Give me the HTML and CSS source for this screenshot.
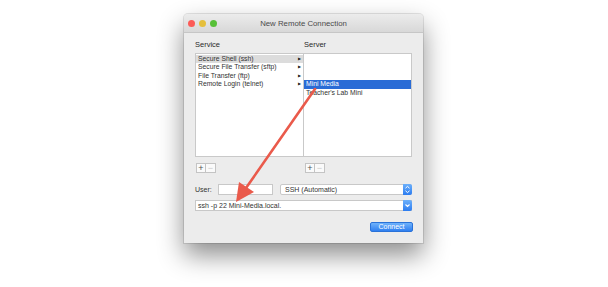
FILE: index.html
```html
<!DOCTYPE html>
<html lang="en">
<head>
    <meta charset="UTF-8">
    <title>New Remote Connection</title>
    <link rel="stylesheet" href="styles.css">
</head>
<body>
    <div class="window">
        <div class="titlebar">
            <div class="lights">
                <span class="light red"></span>
                <span class="light yellow"></span>
                <span class="light green"></span>
            </div>
            <div class="title">New Remote Connection</div>
        </div>
        <div class="content">
            <div class="columns">
                <div class="column">
                    <div class="label">Service</div>
                    <div class="list service-list">
                        <div class="row selected-gray">Secure Shell (ssh)<span class="tri">&#9654;</span></div>
                        <div class="row">Secure File Transfer (sftp)<span class="tri">&#9654;</span></div>
                        <div class="row">File Transfer (ftp)<span class="tri">&#9654;</span></div>
                        <div class="row">Remote Login (telnet)<span class="tri">&#9654;</span></div>
                    </div>
                    <div class="plusminus">
                        <span class="pm">+</span><span class="pm off">&minus;</span>
                    </div>
                </div>
                <div class="column">
                    <div class="label">Server</div>
                    <div class="list server-list">
                        <div class="row"></div>
                        <div class="row"></div>
                        <div class="row"></div>
                        <div class="row selected-blue">Mini Media</div>
                        <div class="row">Teacher's Lab Mini</div>
                    </div>
                    <div class="plusminus">
                        <span class="pm">+</span><span class="pm off">&minus;</span>
                    </div>
                </div>
            </div>

            <div class="user-row">
                <span class="user-label">User:</span>
                <span class="field user-field"></span>
                <span class="field popup">SSH (Automatic)
                    <span class="blue-btn">
                        <svg width="9" height="11" viewBox="0 0 9 11"><path d="M2.5 4.2 L4.5 2.4 L6.5 4.2 M2.5 6.8 L4.5 8.6 L6.5 6.8" fill="none" stroke="#fff" stroke-width="1"/></svg>
                    </span>
                </span>
            </div>

            <div class="field command">ssh -p 22 Mini-Media.local.
                <span class="blue-btn">
                    <svg width="9" height="11" viewBox="0 0 9 11"><path d="M2.5 4.5 L4.5 6.5 L6.5 4.5" fill="none" stroke="#fff" stroke-width="1.1"/></svg>
                </span>
            </div>

            <div class="actions">
                <span class="connect">Connect</span>
            </div>
        </div>
    </div>

    <svg class="arrow" width="608" height="287" viewBox="0 0 608 287">
        <line x1="315" y1="89" x2="246" y2="188" stroke="#ea5a4b" stroke-width="2.6" stroke-linecap="round"/>
        <polygon points="236,202 239,182 254,192" fill="#ea5a4b"/>
    </svg>
</body>
</html>
```

FILE: styles.css
```css
body {
    margin: 0;
    padding: 0;
    background: #fff;
    font-family: "Liberation Sans", Arial, sans-serif;
    color: #222;
    width: 608px;
    height: 287px;
    overflow: hidden;
    position: relative;
}
.window {
    margin: 14px 0 0 184px;
    width: 239px;
    height: 229px;
    background: #ececec;
    border-radius: 4px 4px 0 0;
    box-shadow: 0 12px 26px rgba(0, 0, 0, 0.45), 0 0 0 1px rgba(0, 0, 0, 0.1);
    box-sizing: border-box;
    display: flex;
    flex-direction: column;
}
.titlebar {
    height: 19px;
    box-sizing: border-box;
    border-bottom: 1px solid #c6c6c6;
    background: linear-gradient(#ececec, #d8d8d8);
    border-radius: 4px 4px 0 0;
    position: relative;
    display: flex;
    align-items: center;
}
.lights {
    display: flex;
    gap: 4px;
    padding-left: 4px;
}
.light {
    width: 7px;
    height: 7px;
    border-radius: 50%;
}
.red { background: #fc5b57; }
.yellow { background: #e5bf3c; }
.green { background: #57c038; }
.title {
    position: absolute;
    left: 0;
    right: 0;
    text-align: center;
    font-size: 7.8px;
    color: #4a4a4a;
}
.content {
    padding: 6px 11px 0 11px;
    flex: 1;
    display: flex;
    flex-direction: column;
}
.columns {
    display: grid;
    grid-template-columns: 108px 109px;
}
.label {
    font-size: 7.5px;
    line-height: 11px;
    height: 11px;
    margin-bottom: 3px;
    color: #2a2a2a;
}
.column:last-child .label {
    padding-left: 1px;
}
.list {
    height: 104px;
    box-sizing: border-box;
    background: #fff;
    border: 1px solid #c9c9c9;
    padding-top: 0.5px;
    font-size: 6.8px;
    color: #333;
}
.service-list {
    border-right: none;
}
.row {
    height: 8.67px;
    line-height: 8.67px;
    padding-left: 2px;
    white-space: nowrap;
    position: relative;
}
.tri {
    position: absolute;
    right: 2px;
    top: 0;
    font-size: 4px;
    color: #222;
}
.selected-gray {
    background: #dcdcdc;
}
.selected-blue {
    background: #2a6cd6;
    color: #fff;
}
.plusminus {
    margin-top: 6px;
    height: 11px;
    display: flex;
    padding-left: 1px;
}
.column:last-child .plusminus {
    padding-left: 2px;
}
.pm {
    width: 10px;
    height: 10px;
    box-sizing: border-box;
    border: 1px solid #c4c4c4;
    background: #fafafa;
    font-size: 9px;
    line-height: 8px;
    text-align: center;
    color: #555;
}
.pm.off {
    border-left: none;
    color: #c8c8c8;
}
.user-row {
    margin-top: 10px;
    height: 11px;
    display: flex;
    align-items: center;
}
.user-label {
    font-size: 7px;
    width: 23px;
    color: #333;
}
.field {
    height: 11px;
    box-sizing: border-box;
    background: #fff;
    border: 1px solid #c8c8c8;
    font-size: 7px;
    line-height: 9px;
    color: #333;
    position: relative;
}
.user-field {
    width: 55px;
}
.popup {
    margin-left: 7px;
    width: 132px;
    padding-left: 4px;
    border-radius: 2px;
}
.command {
    margin-top: 5px;
    width: 217px;
    padding-left: 2px;
}
.blue-btn {
    position: absolute;
    right: -1px;
    top: -1px;
    width: 9px;
    height: 11px;
    background: linear-gradient(#6cb0fb, #2c7cf0);
    border-radius: 0 2px 2px 0;
    display: flex;
}
.actions {
    margin-top: 11px;
    display: flex;
    justify-content: flex-end;
    margin-right: -1px;
}
.connect {
    width: 43px;
    height: 10px;
    box-sizing: border-box;
    border-radius: 2px;
    background: linear-gradient(#6fb2fb, #2f7ff0);
    border: 1px solid #2a72d8;
    color: #fff;
    font-size: 7px;
    line-height: 8px;
    text-align: center;
}
.arrow {
    position: absolute;
    left: 0;
    top: 0;
}
```
